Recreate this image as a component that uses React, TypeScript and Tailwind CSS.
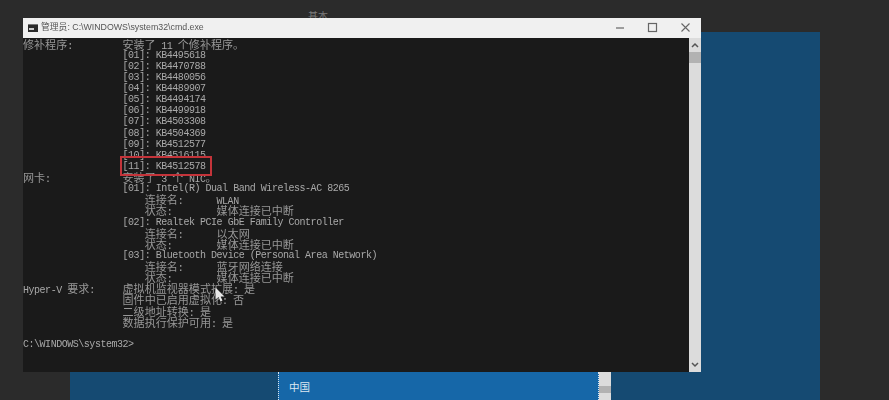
const lines = [
  "修补程序:         安装了 11 个修补程序。",
  "                  [01]: KB4495618",
  "                  [02]: KB4470788",
  "                  [03]: KB4480056",
  "                  [04]: KB4489907",
  "                  [05]: KB4494174",
  "                  [06]: KB4499918",
  "                  [07]: KB4503308",
  "                  [08]: KB4504369",
  "                  [09]: KB4512577",
  "                  [10]: KB4516115",
  "                  [11]: KB4512578",
  "网卡:             安装了 3 个 NIC。",
  "                  [01]: Intel(R) Dual Band Wireless-AC 8265",
  "                      连接名:      WLAN",
  "                      状态:        媒体连接已中断",
  "                  [02]: Realtek PCIe GbE Family Controller",
  "                      连接名:      以太网",
  "                      状态:        媒体连接已中断",
  "                  [03]: Bluetooth Device (Personal Area Network)",
  "                      连接名:      蓝牙网络连接",
  "                      状态:        媒体连接已中断",
  "Hyper-V 要求:     虚拟机监视器模式扩展: 是",
  "                  固件中已启用虚拟化: 否",
  "                  二级地址转换: 是",
  "                  数据执行保护可用: 是",
  " ",
  "C:\\WINDOWS\\system32>",
];

// cjk glyphs sit on a two-cell grid, latin on one cell
function ConsoleLine({ text }: { text: string }) {
  const parts = text.split(/([\u4e00-\u9fff。]+)/);
  return (
    <div className="h-[11.13px] leading-[11.13px] whitespace-pre">
      {parts.map((part, i) =>
        i % 2 === 1 ? (
          <span
            key={i}
            className="text-[11.06px] tracking-normal text-[#989898] font-['Noto_Sans_CJK_SC',sans-serif]"
          >
            {part}
          </span>
        ) : (
          <span key={i}>{part}</span>
        ),
      )}
    </div>
  );
}

function WindowControls() {
  return (
    <div className="flex items-center text-[#666666]">
      <svg width="12" height="12" viewBox="0 0 12 12" className="mr-[20px]">
        <path d="M1 6h8" stroke="currentColor" strokeWidth="1.2" />
      </svg>
      <svg width="12" height="12" viewBox="0 0 12 12" className="mr-[21px]">
        <rect x="1.5" y="1.5" width="8" height="8" fill="none" stroke="currentColor" strokeWidth="1.2" />
      </svg>
      <svg width="12" height="12" viewBox="0 0 12 12" className="mr-[9px]">
        <path d="M1.5 1.5l8 8M9.5 1.5l-8 8" stroke="currentColor" strokeWidth="1.1" />
      </svg>
    </div>
  );
}

function Scrollbar() {
  return (
    <div className="w-[12px] shrink-0 bg-[#dcdcdc] flex flex-col items-center">
      <svg width="12" height="14" viewBox="0 0 12 14" className="text-[#555555]">
        <path d="M3 9l3-3 3 3" fill="none" stroke="currentColor" strokeWidth="1.5" />
      </svg>
      <div className="w-full h-[11px] bg-[#b2b2b2]" />
      <div className="flex-1" />
      <svg width="12" height="14" viewBox="0 0 12 14" className="text-[#555555]">
        <path d="M3 5l3 3 3-3" fill="none" stroke="currentColor" strokeWidth="1.5" />
      </svg>
    </div>
  );
}

export default function App() {
  return (
    <div className="relative w-[889px] h-[400px] overflow-hidden bg-[#2b2b2b]">
      <div className="pt-[32px] pl-[70px]">
        <div className="w-[750px] h-[368px] bg-[#154a72] flex flex-col justify-end pl-[208px]">
          <div className="flex h-[28px] w-[333px]">
            <div className="w-[321px] bg-[#1667a8] border-x border-dotted border-[#d8e4ee] pl-[10px] pt-[1px] flex items-center text-[#dce8f2] text-[10.5px] font-['Noto_Sans_CJK_SC',sans-serif]">
              中国
            </div>
            <div className="w-[12px] bg-[#dcdcdc] flex flex-col">
              <div className="h-[14px]" />
              <div className="h-[7px] bg-[#b2b2b2]" />
            </div>
          </div>
        </div>
      </div>

      <p className="absolute left-[308px] top-[8px] text-[10px] text-[#7a7a7a] font-['Noto_Sans_CJK_SC',sans-serif]">
        基本
      </p>

      <div className="absolute left-[23px] top-[18px] w-[678px] h-[354px] flex flex-col bg-[#1a1a1a]">
        <div className="h-[20px] shrink-0 bg-[#f0f0f0] flex items-center justify-between pl-[5px]">
          <div className="flex items-center gap-[3px]">
            <div className="w-[10px] h-[8px] bg-[#2a2a2a] border-t border-[#777777] flex items-center">
              <span className="ml-[1px] w-[5px] h-[2px] bg-[#cccccc]" />
            </div>
            <span className="text-[8.8px] text-[#555555] font-['Liberation_Sans','Noto_Sans_CJK_SC',sans-serif] blur-[0.2px]">
              管理员: C:\WINDOWS\system32\cmd.exe
            </span>
          </div>
          <WindowControls />
        </div>
        <div className="flex-1 flex min-h-0">
          <div className="flex-1 overflow-hidden pt-[0.5px] text-[10px] tracking-[-0.47px] text-[#a9a9a9] font-['Liberation_Mono',monospace] blur-[0.3px]">
            {lines.map((line, i) => (
              <ConsoleLine key={i} text={line} />
            ))}
          </div>
          <Scrollbar />
        </div>
      </div>

      {/* annotation box drawn over the screenshot */}
      <div className="absolute left-[120px] top-[156px] w-[92px] h-[20px] border-2 border-[#c4343a]" />

      {/* mouse pointer */}
      <svg width="10" height="16" viewBox="0 0 10 16" className="absolute left-[215px] top-[287px]">
        <path d="M0.5 0.5v12l3-2.5 2 4.5 2-1-2-4h4z" fill="#e8e8e8" />
      </svg>
    </div>
  );
}
